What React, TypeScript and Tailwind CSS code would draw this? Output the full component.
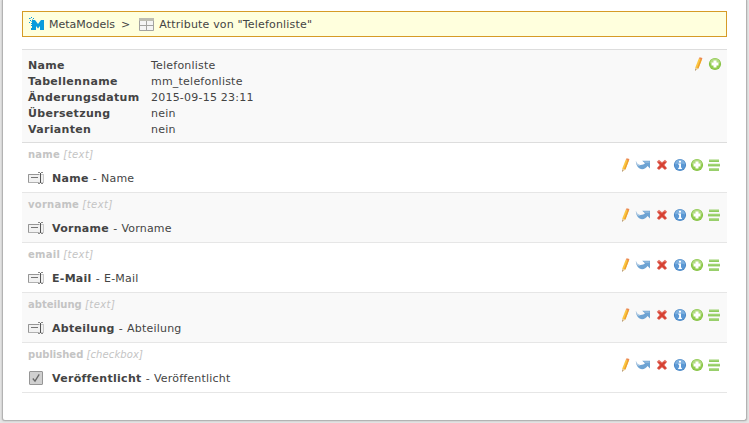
import React from 'react';

const Pencil = () => (
  <svg width="16" height="16" viewBox="0 0 16 16" className="block">
    <path d="M7.8 2.4 10.9 3.4 7.4 12.6 4.3 14.4 4.3 11.6Z" fill="#fbc741" />
    <path d="M9.6 3 10.9 3.4 7.4 12.6 6.1 12.1Z" fill="#eea02e" />
    <path d="M7.9 2.6 8.6 1.2 11.4 2 10.8 4Z" fill="#ec8a50" />
    <path d="M4.3 11.7 7.3 12.6 4.1 14.6Z" fill="#e5cfb4" />
    <path d="M4.2 13.2 5.3 13.8 4 14.7Z" fill="#8a7565" />
  </svg>
);

const Arrow = () => (
  <svg width="16" height="16" viewBox="0 0 16 16" className="block">
    <path d="M0.9 3.8C1.2 6.3 3 8 5.6 8 7.6 8 9 7.4 10 6.3L7.2 3.8H15V11.5L12.6 9C11.2 11 9.4 12.2 7.2 12.2 3.6 12.2 0.9 8.5 0.9 3.8Z" fill="#6da3d3" />
    <path d="M0.9 3.8C1.2 6.3 3 8 5.6 8 4.8 9.2 2.6 8.8 1.5 7.4 1 6.2 0.8 5 0.9 3.8Z" fill="#b5cde3" />
    <path d="M8.5 4.3H14.5V6H10.8Z" fill="#8db7dc" />
  </svg>
);

const Cross = () => (
  <svg width="16" height="16" viewBox="0 0 16 16" className="block">
    <path d="M2.8 4.8 5 2.8 8 5.3 11 2.8 13.1 4.8 10.6 8 13.1 11.2 11 13.1 8 10.6 5 13.1 2.8 11.2 5.4 8Z" fill="#e27568" />
    <path d="M4.3 4.4 11.6 11.7M11.6 4.4 4.3 11.7" stroke="#d63d2f" strokeWidth="1.9" />
    <path d="M3.8 4.6 5 3.6 6.3 4.8M9.8 4.8 11 3.6 12.2 4.6" fill="none" stroke="#ee9a90" strokeWidth="0.9" />
  </svg>
);

const Info = () => (
  <svg width="16" height="16" viewBox="0 0 16 16" className="block">
    <circle cx="8" cy="8" r="6.1" fill="#4a87c6" />
    <circle cx="8" cy="8" r="5.2" fill="#5b98d4" />
    <path d="M3 7.5A5 5 0 0 1 13 7.5Q8 5.5 3 7.5Z" fill="#7eb0df" />
    <path d="M7 3.8H9V5.4H7ZM6.3 6.6H9V10.7H9.9V11.9H6.2V10.7H7.1V7.7H6.3Z" fill="#fff" />
  </svg>
);

const Plus = () => (
  <svg width="16" height="16" viewBox="0 0 16 16" className="block">
    <circle cx="8" cy="8" r="6.1" fill="#86c244" />
    <circle cx="8" cy="8" r="5.2" fill="#92cc4f" />
    <path d="M3 7.5A5 5 0 0 1 13 7.5Q8 5.5 3 7.5Z" fill="#b2db80" />
    <path d="M6.5 4.5H9.5V6.5H11.5V9.5H9.5V11.5H6.5V9.5H4.5V6.5H6.5Z" fill="#fff" />
  </svg>
);

const Drag = () => (
  <svg width="16" height="16" viewBox="0 0 16 16" className="block">
    <path d="M3 2.6H13V5H3ZM2 6.7H14V9.3H2ZM3 11.2H13V13.7H3Z" fill="#a0d474" />
    <path d="M3 4H13V5H3ZM2 8.3H14V9.3H2ZM3 12.7H13V13.7H3Z" fill="#8eca5d" />
  </svg>
);

const Logo = () => (
  <svg width="17" height="16" viewBox="0 0 17 16" className="block" fill="#0a9bdc">
    <path d="M4 4H7L10 8 13 4H16V14H12V10L10 12.4 8 10V14H3V12H4V10H3V9H4Z" />
    <path d="M1 2h1v1H1zM3 1h1v1H3zM2 4h1v1H2zM5 2h1v1H5zM1 6h1v1H1zM3 7h1v1H3z" />
    <path d="M2 2h1v1H2zM3 5h1v1H3zM4 3h1v1H4z" opacity="0.5" />
  </svg>
);

const Table = () => (
  <svg width="16" height="16" viewBox="0 0 16 16" className="block">
    <rect x="1" y="2" width="15" height="13" rx="1" fill="#a3a3a0" />
    <rect x="1" y="2" width="15" height="3" rx="1" fill="#bdbdb2" />
    <path d="M2 5h6v4H2zM9 5h6v4H9zM2 10h6v4H2zM9 10h6v4H9z" fill="#f4f4f4" />
  </svg>
);

const TextField = () => (
  <svg width="16" height="16" viewBox="0 0 16 16" className="block">
    <rect x="0.5" y="4.5" width="15" height="8" fill="#f1f1f1" stroke="#c9c9c9" />
    <path d="M0.5 12V4.5H11" fill="none" stroke="#969696" />
    <path d="M0 12.5H11" stroke="#b0b0b0" />
    <path d="M3 7.5H10" stroke="#757575" />
    <path d="M12.5 3V13" stroke="#555" />
    <path d="M10 2.5H12M13 2.5H15M10 13.5H12M13 13.5H15" stroke="#8a8a8a" />
  </svg>
);

const Checkbox = () => (
  <svg width="16" height="16" viewBox="0 0 16 16" className="block">
    <rect x="1.5" y="1.5" width="13" height="13" rx="0.5" fill="#d0d0d0" stroke="#969696" />
    <path d="M4.8 8.5 7 11.2 11.2 4.3" fill="none" stroke="#666" strokeWidth="1.3" />
  </svg>
);

const details = [
  ['Name', 'Telefonliste'],
  ['Tabellenname', 'mm_telefonliste'],
  ['Änderungsdatum', '2015-09-15 23:11'],
  ['Übersetzung', 'nein'],
  ['Varianten', 'nein'],
];

const attributes = [
  { column: 'name', type: 'text', label: 'Name' },
  { column: 'vorname', type: 'text', label: 'Vorname' },
  { column: 'email', type: 'text', label: 'E-Mail' },
  { column: 'abteilung', type: 'text', label: 'Abteilung' },
  { column: 'published', type: 'checkbox', label: 'Veröffentlicht' },
];

export default function App() {
  return (
    <div className="h-[423px] w-[749px] overflow-hidden bg-[#e5e5e5] px-[2px] font-['DejaVu_Sans',Verdana,sans-serif] text-[11px] leading-4 text-[#444]">
      <main className="h-[421px] rounded-b-[3px] border border-t-0 border-[#b3b3b3] bg-white px-[19px] pt-[11px] shadow-[0_0_2px_#aaa]">
        <nav className="flex h-[26px] items-center border border-[#d69b26] bg-[#ffffdd] pl-[5px]">
          <Logo />
          <span className="ml-1 pt-[2px]">MetaModels</span>
          <span className="ml-[6px] pt-[2px]">&gt;</span>
          <span className="ml-[8px]"><Table /></span>
          <span className="ml-[5px] pt-[2px] tracking-[0.18px]">Attribute von "Telefonliste"</span>
        </nav>
        <header className="mt-3 flex h-[94px] justify-between border-y border-[#dddddd] bg-[#f9f9f9] pt-[6px] pr-[4px] pl-[6px]">
          <dl className="pt-[2px]">
            {details.map(([key, value]) => (
              <div key={key} className="flex">
                <dt className="w-[123px] font-bold tracking-[0.32px]">{key}</dt>
                <dd className="tracking-[0.22px]">{value}</dd>
              </div>
            ))}
          </dl>
          <div className="flex h-4">
            <Pencil />
            <Plus />
          </div>
        </header>
        <ul>
          {attributes.map(({ column, type, label }) => (
            <li key={column} className="flex h-[50px] justify-between border-b border-[#e6e6e6] pr-[5px] pl-[6px] even:bg-[#f9f9f9]">
              <div className="pt-1">
                <div className="text-[10px] text-[#c4c4c4]">
                  <b className={column.length < 8 ? 'tracking-[0.25px]' : ''}>{column}</b>{' '}
                  <i className={type === 'text' ? 'tracking-[0.45px]' : 'tracking-[0.1px]'}>[{type}]</i>
                </div>
                <div className="mt-[7px] flex gap-2">
                  {type === 'text' ? <TextField /> : <Checkbox />}
                  <span className="pt-px tracking-[0.2px] [word-spacing:0.4px]">
                    <b className="tracking-[0.28px]">{label}</b> - {label}
                  </span>
                </div>
              </div>
              <div className="flex items-start gap-[2px] pt-[14px]">
                <Pencil />
                <span className="-ml-px"><Arrow /></span>
                <span className="ml-px"><Cross /></span>
                <Info />
                <span className="-ml-px"><Plus /></span>
                <span className="-ml-px"><Drag /></span>
              </div>
            </li>
          ))}
        </ul>
      </main>
    </div>
  );
}
